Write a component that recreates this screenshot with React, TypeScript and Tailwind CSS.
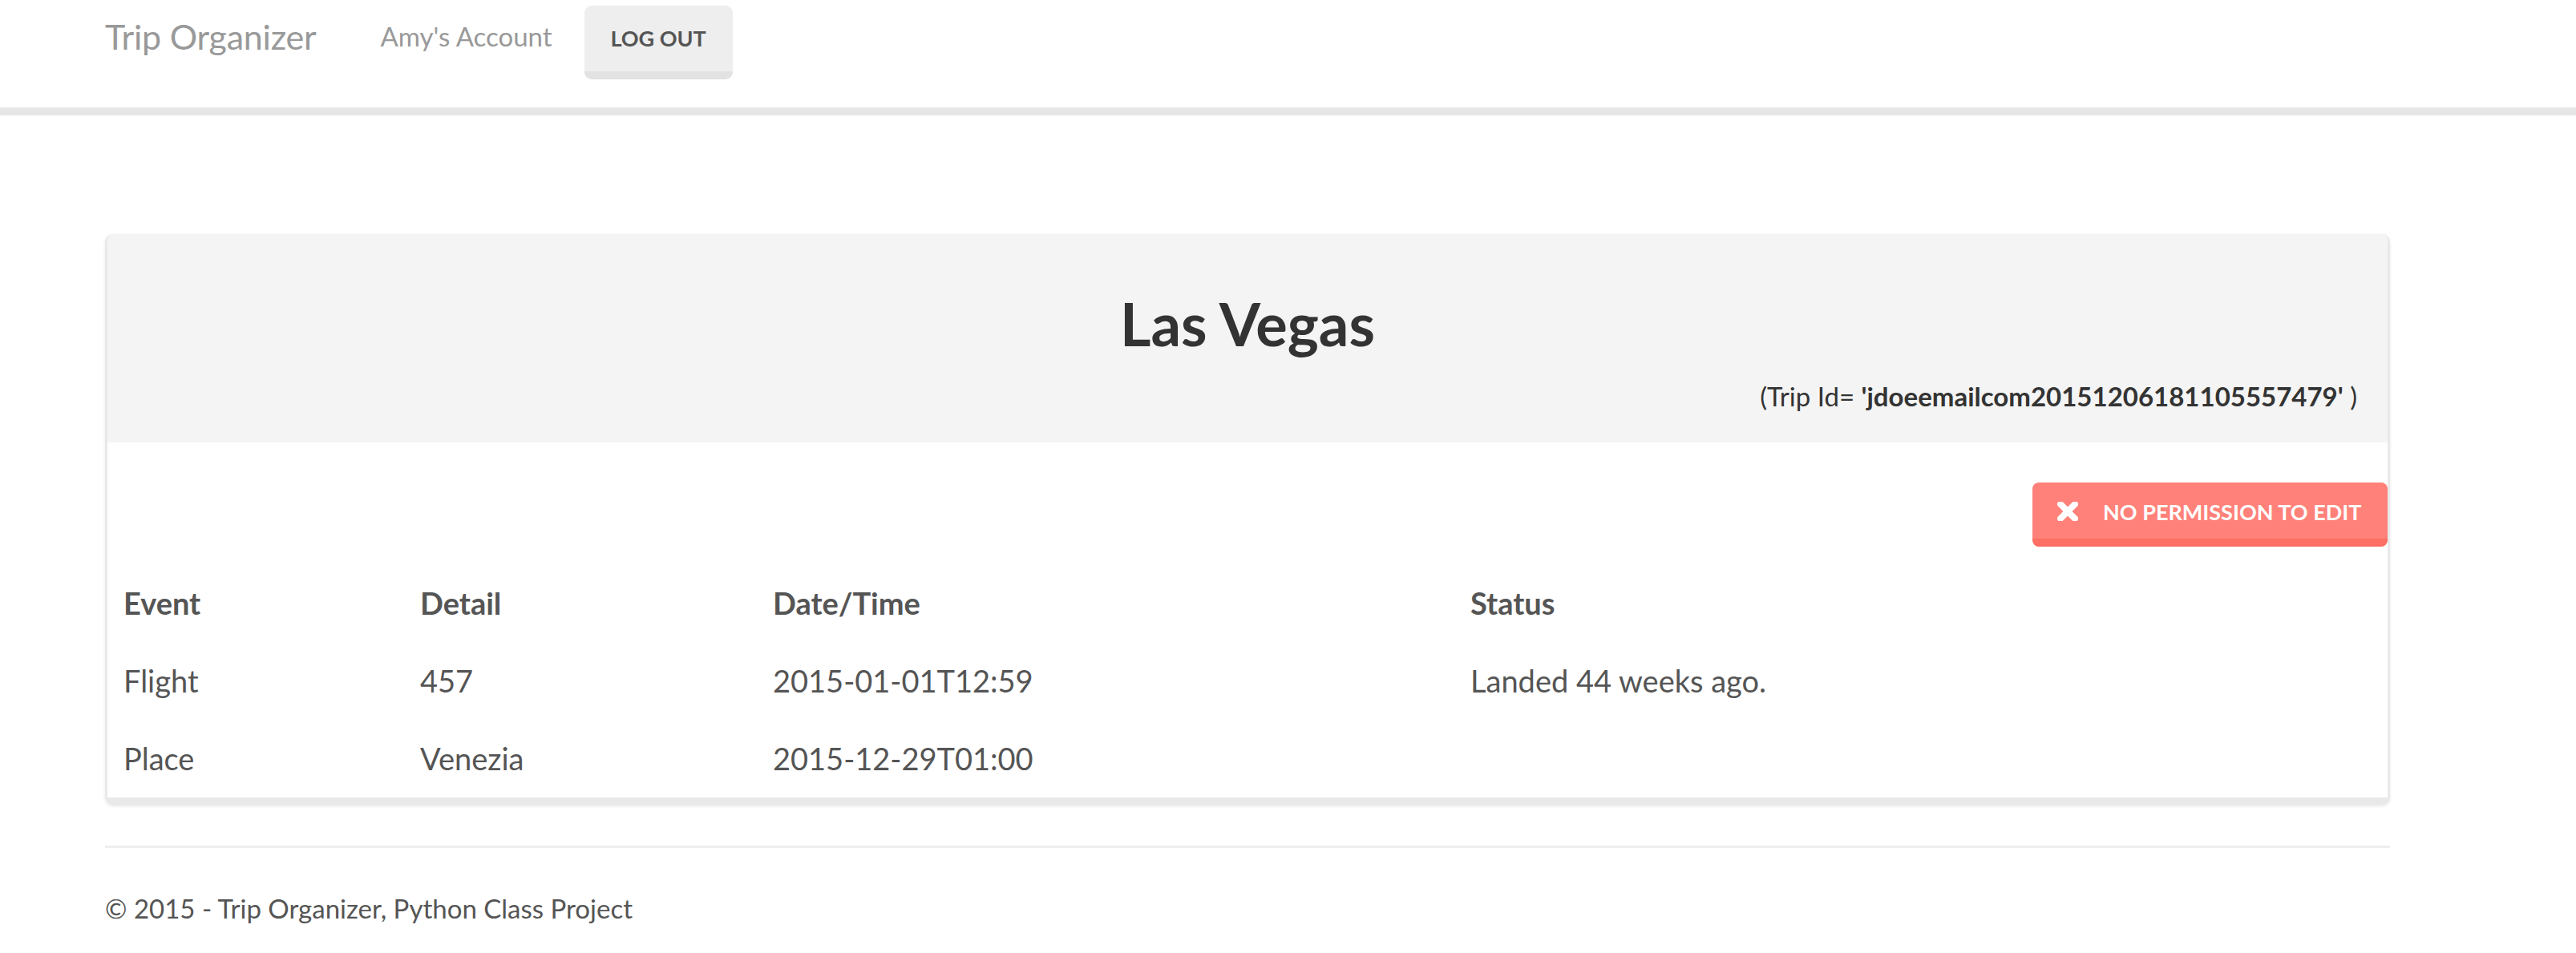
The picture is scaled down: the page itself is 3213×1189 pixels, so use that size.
import React from 'react';

const rows = [
  { event: 'Flight', detail: '457', date: '2015-01-01T12:59', status: 'Landed 44 weeks ago.' },
  { event: 'Place', detail: 'Venezia', date: '2015-12-29T01:00', status: '' },
];

const App = () => {
  return (
    <div className="min-h-[1189px] bg-white text-[#555] font-['Lato','Liberation_Sans',sans-serif]">
      {/* Navbar */}
      <header className="h-[144px] border-b-[10px] border-[#e6e6e6] bg-white">
        <div className="ml-[131px] flex items-start">
          <a className="mt-[19px] text-[43px] leading-[54px] tracking-[-0.2px] text-[#999]">Trip Organizer</a>
          <a className="ml-[80px] mt-[20px] text-[33px] leading-[50px] text-[#999]">Amy's Account</a>
          <button className="ml-[40px] mt-[7px] h-[92px] w-[185px] rounded-[9px] border-b-[10px] border-[#e2e2e2] bg-[#eeeeee] text-[27px] font-bold uppercase text-[#555]">
            Log out
          </button>
        </div>
      </header>

      <main className="ml-[131px] w-[2850px] pt-[148px]">
        {/* Panel */}
        <div className="overflow-hidden rounded-[10px] border-x-[3px] border-b-[10px] border-[#e9e9e9] shadow-[0_1px_4px_rgba(0,0,0,0.08)]">
          <div className="h-[260px] bg-[#f4f4f4] pt-[72px]">
            <h2 className="text-center text-[74px] font-bold leading-[80px] text-[#333]">Las Vegas</h2>
            <p className="mt-[26px] pr-[38px] text-right text-[33px] leading-[48px] text-[#333]">
              (Trip Id= <b>'jdoeemailcom20151206181105557479'</b> )
            </p>
          </div>

          <div className="bg-white pt-[50px]">
            <div className="flex justify-end">
              <button className="flex h-[80px] w-[443px] items-center whitespace-nowrap rounded-[8px] border-b-[10px] border-[#fd6e64] bg-[#ff8179] pl-[31px] text-[27px] font-bold uppercase text-white">
                <svg width="26" height="24" viewBox="0 0 26 24" className="mt-[2px]">
                  <path d="M4 3 L22 21 M22 3 L4 21" stroke="white" strokeWidth="8" strokeLinecap="round" />
                </svg>
                <span className="ml-[31px] mt-[4px]">No permission to edit</span>
              </button>
            </div>

            <table className="mt-[22px] w-full table-fixed text-left text-[38px] leading-[57px]">
              <thead>
                <tr>
                  <th className="w-[370px] px-[20px] py-[20px] font-bold">Event</th>
                  <th className="w-[440px] px-[20px] py-[20px] font-bold">Detail</th>
                  <th className="w-[870px] px-[20px] py-[20px] font-bold">Date/Time</th>
                  <th className="px-[20px] py-[20px] font-bold">Status</th>
                </tr>
              </thead>
              <tbody>
                {rows.map((r) => (
                  <tr key={r.event}>
                    <td className="px-[20px] py-[20px]">{r.event}</td>
                    <td className="px-[20px] py-[20px]">{r.detail}</td>
                    <td className="px-[20px] py-[20px]">{r.date}</td>
                    <td className="px-[20px] py-[20px]">{r.status}</td>
                  </tr>
                ))}
              </tbody>
            </table>
          </div>
        </div>

        {/* Footer */}
        <hr className="mt-[50px] border-t-[3px] border-[#eeeeee]" />
        <footer className="pt-[50px] text-[33px] leading-[50px] text-[#555]">
          © 2015 - Trip Organizer, Python Class Project
        </footer>
      </main>
    </div>
  );
};

export default App;
